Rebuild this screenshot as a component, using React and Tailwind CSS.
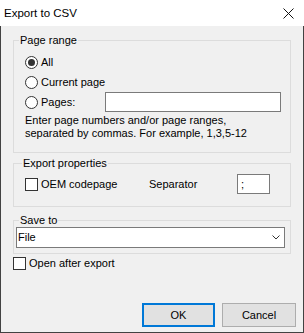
import React from "react";

const font = { fontFamily: '"Liberation Sans", Arial, sans-serif' };

function Radio({ checked }) {
  return (
    <span className="w-[13px] h-[13px] rounded-full border border-[#333333] bg-white flex items-center justify-center shrink-0">
      {checked && <span className="w-[7px] h-[7px] rounded-full bg-[#333333]" />}
    </span>
  );
}

function Check() {
  return <span className="w-[13px] h-[13px] border border-[#333333] bg-white shrink-0" />;
}

export default function App() {
  return (
    <div
      className="w-[304px] h-[333px] flex flex-col text-[11px] leading-[13px] text-black"
      style={font}
    >
      <div className="h-[26px] bg-white flex items-center justify-between pl-[4px] pr-[10px] shrink-0">
        <span className="text-[11.5px]">Export to CSV</span>
        <svg width="11" height="11" viewBox="0 0 11 11" className="block">
          <path d="M0.5 0.5 L10.5 10.5 M10.5 0.5 L0.5 10.5" stroke="#111" strokeWidth="1" fill="none" />
        </svg>
      </div>
      <div className="flex-1 flex flex-col bg-[#f0f0f0] border-x border-b border-[#424242] px-3">
        <fieldset className="mt-[8px] border border-[#dcdcdc] p-0 m-0">
          <legend className="ml-[5px] px-[1px]">Page range</legend>
          <div className="pl-[11px] pr-[9px] pt-[5px] pb-[12px]">
            <div className="h-[20px] flex items-center gap-[3px]">
              <Radio checked />
              <span>All</span>
            </div>
            <div className="h-[20px] flex items-center gap-[3px]">
              <Radio />
              <span>Current page</span>
            </div>
            <div className="h-[20px] flex items-center">
              <div className="w-[80px] flex items-center gap-[3px]">
                <Radio />
                <span>Pages:</span>
              </div>
              <div className="flex-1 h-[20px] border border-[#7a7a7a] bg-white" />
            </div>
            <div className="mt-[2px]">
              Enter page numbers and/or page ranges,
              <br />
              separated by commas. For example, 1,3,5-12
            </div>
          </div>
        </fieldset>

        <fieldset className="mt-[4px] border border-[#dcdcdc] p-0 m-0">
          <legend className="ml-[8px] px-[1px]">Export properties</legend>
          <div className="pl-[11px] pt-[4px] pb-[12px]">
            <div className="h-[20px] flex items-center">
              <div className="w-[124px] flex items-center gap-[3px]">
                <Check />
                <span>OEM codepage</span>
              </div>
              <span className="w-[88px]">Separator</span>
              <div className="w-[33px] h-[20px] border border-[#7a7a7a] bg-white flex items-center pl-[3px]">
                ;
              </div>
            </div>
          </div>
        </fieldset>

        <fieldset className="mt-[7px] border border-[#dcdcdc] p-0 m-0">
          <legend className="ml-[5px] px-[1px]">Save to</legend>
          <div className="pl-[2px] pr-[5px] pb-[5px]">
            <div className="h-[21px] border border-[#7a7a7a] bg-white flex items-center justify-between pl-[1px] pr-[4px]">
              <span>File</span>
              <svg width="8" height="5" viewBox="0 0 8 5" className="block">
                <path d="M0.5 0.5 L4 4 L7.5 0.5" stroke="#333" strokeWidth="1" fill="none" />
              </svg>
            </div>
          </div>
        </fieldset>

        <div className="mt-[3px] flex items-center gap-[3px]">
          <Check />
          <span>Open after export</span>
        </div>

        <div className="mt-auto pb-[5px] -mr-[5px] flex justify-end gap-[7px]">
          <button className="w-[73px] h-[24px] border-2 border-[#0078d7] bg-[#e1e1e1] text-[11px]" style={font}>
            OK
          </button>
          <button className="w-[74px] h-[24px] border border-[#adadad] bg-[#e1e1e1] text-[11px]" style={font}>
            Cancel
          </button>
        </div>
      </div>
    </div>
  );
}
